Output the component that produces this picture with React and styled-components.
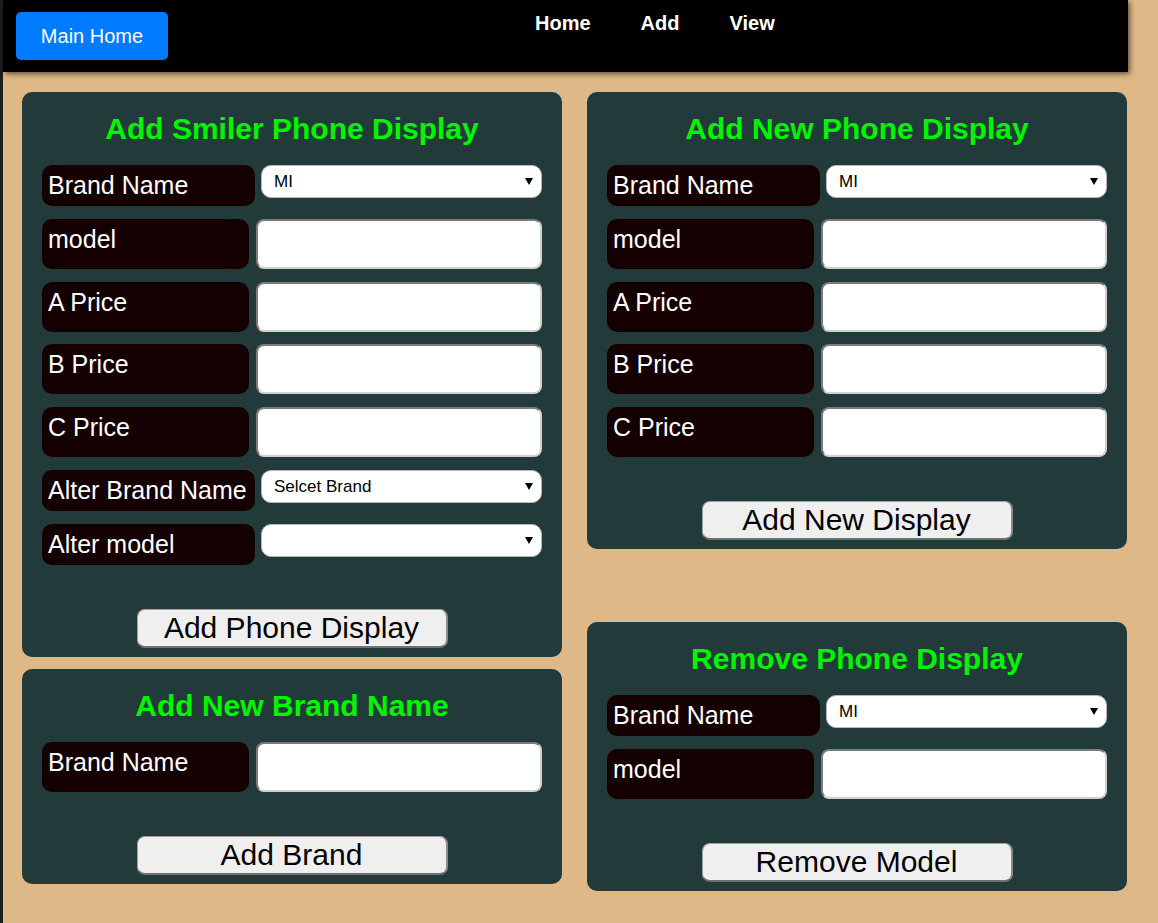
import React from 'react';
import styled, { createGlobalStyle } from 'styled-components';

const Colors = {
  TAN: '#deb887',
  PANEL: '#233a3b',
  LABEL: '#150000',
  GREEN: '#00f500',
  BLUE: '#007bff',
  BUTTON: '#efefef',
};

const GlobalStyle = createGlobalStyle`
  html, body {
    margin: 0;
    padding: 0;
    background-color: ${Colors.TAN};
    font-family: "Liberation Sans", Arial, sans-serif;
  }
  * {
    box-sizing: border-box;
  }
`;

const Page = styled.div`
  min-height: 100vh;
  border-left: 3px solid #1e1e1e;
  padding-bottom: 20px;
`;

const Header = styled.header`
  display: flex;
  align-items: flex-start;
  width: 1125px;
  height: 72px;
  padding: 12px 13px;
  background-color: #000;
  box-shadow: 2px 2px 5px rgba(0, 0, 0, 0.55);
`;

const HomeButton = styled.button`
  width: 152px;
  height: 48px;
  border: 0;
  border-radius: 5px;
  background-color: ${Colors.BLUE};
  color: white;
  font-family: inherit;
  font-size: 20px;
  cursor: pointer;
`;

const Nav = styled.nav`
  display: flex;
  gap: 50px;
  margin-left: 367px;
`;

const NavLink = styled.a`
  color: white;
  font-weight: bold;
  font-size: 20px;
  line-height: 23px;
  text-decoration: none;
  cursor: pointer;
`;

const Main = styled.main`
  display: flex;
  align-items: flex-start;
  gap: 25px;
  padding: 20px 0 0 19px;
`;

const Column = styled.div`
  display: flex;
  flex-direction: column;
  gap: ${(p) => p.$gap}px;
  width: 540px;
`;

const Panel = styled.section`
  background-color: ${Colors.PANEL};
  border-radius: 10px;
  padding: 19px 20px 9px;
`;

const Title = styled.h2`
  margin: 0 0 18px;
  color: ${Colors.GREEN};
  font-size: 30px;
  line-height: 36px;
  font-weight: bold;
  text-align: center;
`;

const Rows = styled.div`
  display: flex;
  flex-direction: column;
  gap: 12.8px;
`;

const Row = styled.div`
  display: flex;
  align-items: stretch;
  gap: ${(p) => (p.$select ? 6 : 7)}px;
`;

const Label = styled.div`
  flex: 0 0 ${(p) => (p.$select ? 213 : 207)}px;
  padding: 7px 6px;
  border-radius: 10px;
  background-color: ${Colors.LABEL};
  color: white;
  font-size: 25px;
  line-height: 27px;
  white-space: nowrap;
`;

const TextInput = styled.input`
  flex: 1;
  height: 50px;
  border: 2px inset #d0d0d0;
  border-radius: 8px;
  background: white;
  font-family: inherit;
  font-size: 18px;
  padding: 0 8px;
`;

const SelectWrap = styled.div`
  position: relative;
  flex: 1;
  align-self: flex-start;
  height: 33px;
`;

const Select = styled.select`
  width: 100%;
  height: 33px;
  appearance: none;
  border: 1px solid #b8b8b8;
  border-radius: 10px;
  background: white;
  color: #000;
  padding: 0 28px 0 12px;
  font-family: inherit;
  font-size: 17px;
`;

const Arrow = styled.span`
  position: absolute;
  right: 9px;
  top: 13px;
  width: 0;
  height: 0;
  border-left: 4px solid transparent;
  border-right: 4px solid transparent;
  border-top: 7px solid #000;
  pointer-events: none;
`;

const ActionButton = styled.button`
  display: block;
  width: 311px;
  height: 39px;
  margin: 44px auto 0;
  padding: 0;
  background-color: ${Colors.BUTTON};
  border: 1px solid #a0a0a0;
  border-right: 2px solid #8a8a8a;
  border-bottom: 2px solid #707070;
  border-radius: 8px;
  color: #000;
  font-family: inherit;
  font-size: 30px;
  line-height: 1;
  cursor: pointer;
`;

const SelectField = ({ label, options }) => (
  <Row $select>
    <Label $select>{label}</Label>
    <SelectWrap>
      <Select>
        {options.map((o) => (
          <option key={o}>{o}</option>
        ))}
      </Select>
      <Arrow />
    </SelectWrap>
  </Row>
);

const InputField = ({ label }) => (
  <Row>
    <Label>{label}</Label>
    <TextInput type="text" />
  </Row>
);

const brands = ['MI', 'Samsung', 'Oppo', 'Vivo'];

export default function App() {
  return (
    <>
      <GlobalStyle />
      <Page>
        <Header>
          <HomeButton>Main Home</HomeButton>
          <Nav>
            <NavLink>Home</NavLink>
            <NavLink>Add</NavLink>
            <NavLink>View</NavLink>
          </Nav>
        </Header>
        <Main>
          <Column $gap={12}>
            <Panel>
              <Title>Add Smiler Phone Display</Title>
              <Rows>
                <SelectField label="Brand Name" options={brands} />
                <InputField label="model" />
                <InputField label="A Price" />
                <InputField label="B Price" />
                <InputField label="C Price" />
                <SelectField label="Alter Brand Name" options={['Selcet Brand', ...brands]} />
                <SelectField label="Alter model" options={['']} />
              </Rows>
              <ActionButton>Add Phone Display</ActionButton>
            </Panel>
            <Panel>
              <Title>Add New Brand Name</Title>
              <Rows>
                <InputField label="Brand Name" />
              </Rows>
              <ActionButton>Add Brand</ActionButton>
            </Panel>
          </Column>
          <Column $gap={73}>
            <Panel>
              <Title>Add New Phone Display</Title>
              <Rows>
                <SelectField label="Brand Name" options={brands} />
                <InputField label="model" />
                <InputField label="A Price" />
                <InputField label="B Price" />
                <InputField label="C Price" />
              </Rows>
              <ActionButton>Add New Display</ActionButton>
            </Panel>
            <Panel>
              <Title>Remove Phone Display</Title>
              <Rows>
                <SelectField label="Brand Name" options={brands} />
                <InputField label="model" />
              </Rows>
              <ActionButton>Remove Model</ActionButton>
            </Panel>
          </Column>
        </Main>
      </Page>
    </>
  );
}
